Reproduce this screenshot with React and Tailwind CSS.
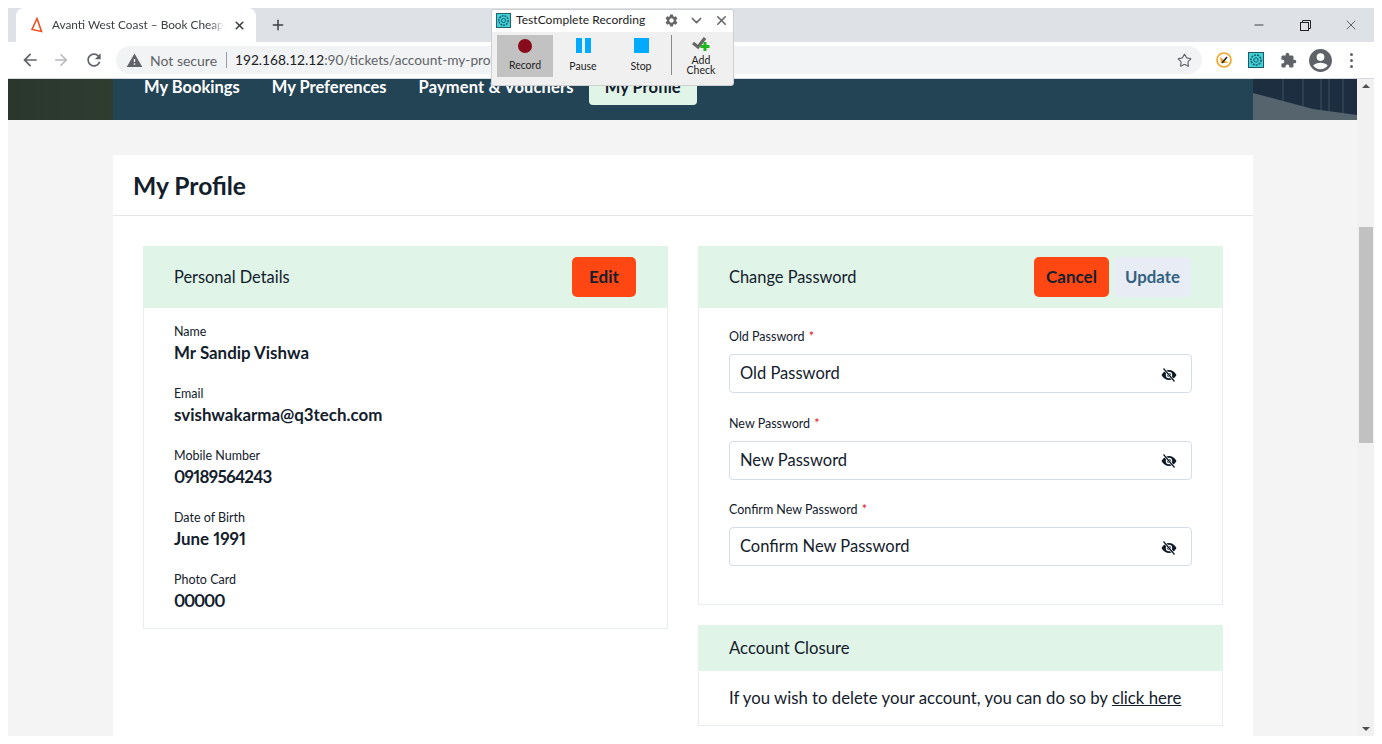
import { ArrowRight, Star, X, Plus, Minus, ChevronDown } from 'lucide-react'

const details = [
  { label: 'Name', value: 'Mr Sandip Vishwa', cls: '' },
  { label: 'Email', value: 'svishwakarma@q3tech.com', cls: '' },
  { label: 'Mobile Number', value: '09189564243', cls: 'tracking-[-0.7px]' },
  { label: 'Date of Birth', value: 'June 1991', cls: '' },
  { label: 'Photo Card', value: '00000', cls: 'tracking-[-1.2px]' },
]

const passwords = ['Old Password', 'New Password', 'Confirm New Password']

const TcLogo = ({ size = 16 }) => (
  <svg width={size} height={size} viewBox="0 0 16 16">
    <rect x="0.5" y="0.5" width="15" height="15" fill="#3fd0d8" stroke="#1d5a66" />
    <circle cx="8" cy="8" r="5" fill="none" stroke="#1d5a66" strokeWidth="1.5" strokeDasharray="2 1" />
    <circle cx="8" cy="8" r="2.2" fill="none" stroke="#1d5a66" />
  </svg>
)

// crossed eye, filled like the site's icon font
const HiddenEye = () => (
  <svg width="16" height="14" viewBox="0 0 16 14" className="mt-[2px]">
    <path d="M0.5 7C2.5 3.6 5 2 8 2s5.5 1.6 7.5 5c-2 3.4-4.5 5-7.5 5S2.500 10.400 0.500 7z" fill="#0d1a26" />
    <circle cx="8" cy="7" r="2.6" fill="none" stroke="#fff" strokeWidth="1.2" />
    <path d="M2.500 0.500L13.500 13.500" stroke="#fff" strokeWidth="2.400" />
    <path d="M2.500 0.500L13.500 13.500" stroke="#0d1a26" strokeWidth="1.200" />
  </svg>
)

const MaterialIcon = ({ d, size = 24, className = '' }) => (
  <svg width={size} height={size} viewBox="0 0 24 24" fill="currentColor" className={className}>
    <path d={d} />
  </svg>
)

const ICONS = {
  back: 'M20 11H7.830l5.590-5.590L12 4l-8 8 8 8 1.410-1.410L7.830 13H20v-2z',
  reload: 'M17.650 6.350C16.200 4.900 14.210 4 12 4c-4.420 0-7.990 3.580-7.990 8s3.570 8 7.990 8c3.730 0 6.840-2.550 7.730-6h-2.080c-.820 2.330-3.040 4-5.650 4-3.310 0-6-2.690-6-6s2.690-6 6-6c1.660 0 3.140.690 4.220 1.780L13 11h7V4l-2.350 2.350z',
  warning: 'M1 21h22L12 2 1 21zm12-3h-2v-2h2v2zm0-4h-2v-4h2v4z',
  puzzle: 'M20.500 11H19V7c0-1.100-.900-2-2-2h-4V3.500C13 2.120 11.880 1 10.500 1S8 2.120 8 3.500V5H4c-1.100 0-1.990.900-1.990 2v3.800H3.500c1.490 0 2.700 1.210 2.700 2.700s-1.210 2.700-2.700 2.700H2V20c0 1.100.900 2 2 2h3.800v-1.500c0-1.490 1.210-2.700 2.700-2.700 1.490 0 2.700 1.210 2.700 2.700V22H17c1.100 0 2-.900 2-2v-4h1.500c1.380 0 2.500-1.120 2.500-2.500S21.880 11 20.500 11z',
  profile: 'M12 1a11 11 0 1 0 0 22 11 11 0 0 0 0-22zm0 4a3.700 3.700 0 1 1 0 7.400A3.700 3.700 0 0 1 12 5zm0 15.500c-2.900 0-5.500-1.400-7-3.600 1-1.700 4.500-2.700 7-2.700s6 1 7 2.700c-1.500 2.200-4.100 3.600-7 3.600z',
  gear: 'M19.140 12.940c.040-.300.060-.610.060-.940 0-.320-.020-.640-.070-.940l2.030-1.580a.490.490 0 0 0 .120-.610l-1.920-3.320a.488.488 0 0 0-.590-.220l-2.390.960c-.500-.380-1.030-.700-1.620-.940l-.360-2.540a.484.484 0 0 0-.480-.410h-3.840c-.240 0-.430.170-.470.410l-.360 2.540c-.590.240-1.130.570-1.620.940l-2.390-.960c-.220-.080-.470 0-.590.220L2.740 8.870c-.120.210-.080.470.120.610l2.030 1.580c-.050.300-.090.630-.090.940s.020.640.070.940l-2.030 1.580a.490.490 0 0 0-.120.610l1.920 3.320c.120.220.370.290.590.220l2.390-.960c.500.380 1.030.700 1.620.940l.360 2.540c.050.240.240.410.480.410h3.840c.240 0 .440-.170.470-.410l.360-2.540c.590-.240 1.130-.560 1.620-.940l2.390.960c.220.080.470 0 .590-.220l1.920-3.320c.120-.220.070-.470-.120-.610l-2.010-1.580zM12 15.600c-1.980 0-3.600-1.620-3.600-3.600s1.620-3.600 3.600-3.600 3.600 1.620 3.600 3.600-1.620 3.600-3.600 3.600z',
}

function BrowserChrome() {
  return (
    <>
      <div className="h-[34px] bg-[#dee1e6] flex items-end shrink-0">
        <div className="ml-[8px] w-[240px] h-[34px] bg-white rounded-t-lg flex items-center pl-[15px] pr-[10px] text-[#3c4043]">
          <svg width="12" height="16" viewBox="0 0 12 16" className="shrink-0">
            <path d="M6 1.500L1 12.500L10.500 14.500Z" fill="none" stroke="#f04e23" strokeWidth="1.600" />
          </svg>
          <span className="ml-[9px] w-[172px] overflow-hidden whitespace-nowrap text-[11.800px] [mask-image:linear-gradient(to_right,black_92%,transparent)]">Avanti West Coast – Book Cheap Train Tickets</span>
          <X size={13} strokeWidth={3} className="ml-auto" />
        </div>
        <div className="h-[34px] flex items-center ml-[14px] text-[#3c4043]">
          <Plus size={16} strokeWidth={2.200} />
        </div>
        <div className="ml-auto h-[34px] flex items-center text-[#222]">
          <div className="w-[46px] flex justify-center"><Minus size={14} strokeWidth={1.400} /></div>
          <div className="w-[46px] flex justify-center">
            <svg width="11" height="11" viewBox="0 0 11 11" fill="none" stroke="#222">
              <rect x="0.500" y="2.500" width="8" height="8" />
              <path d="M2.500 2.500V0.500H10.500V8.500H8.500" />
            </svg>
          </div>
          <div className="w-[46px] flex justify-center"><X size={16} strokeWidth={1} /></div>
        </div>
      </div>
      <div className="h-[37px] bg-white border-b border-[#d5d7db] flex items-center shrink-0 text-[#5f6368]">
        <div className="w-[108px] flex items-center pl-[12px] gap-[12px]">
          <MaterialIcon d={ICONS.back} size={20} />
          <ArrowRight size={18} strokeWidth={2} className="text-[#b5b7ba]" />
          <MaterialIcon d={ICONS.reload} size={20} className="ml-[2px]" />
        </div>
        <div className="w-[1086px] h-[28px] rounded-full bg-[#f1f3f4] flex items-center pl-[10px] pr-[10px] text-[14px]">
          <MaterialIcon d={ICONS.warning} size={17} />
          <span className="ml-[7px]">Not secure</span>
          <span className="ml-[9px] mr-[8px] w-px h-[16px] bg-[#9a9da1]" />
          <span className="text-[#202124] text-[13.700px]">192.168.12.12<span className="text-[#5f6368]">:90/tickets/account-my-profile</span></span>
          <Star size={15} strokeWidth={1.800} className="ml-auto" />
        </div>
        <div className="flex items-center ml-[14px] gap-[16px]">
          <svg width="16" height="16" viewBox="0 0 16 16">
            <circle cx="8" cy="8" r="7" fill="#fff" stroke="#f7a11a" strokeWidth="1.600" />
            <path d="M4 5L12 11H5Z" fill="#f7a11a" />
            <path d="M11 5L6 11" stroke="#222" strokeWidth="1.500" />
          </svg>
          <TcLogo />
          <MaterialIcon d={ICONS.puzzle} size={17} />
        </div>
        <MaterialIcon d={ICONS.profile} size={25} className="ml-[11px]" />
        <div className="ml-[17px] flex flex-col gap-[3px]">
          <span className="w-[3px] h-[3px] rounded-full bg-[#5f6368]" />
          <span className="w-[3px] h-[3px] rounded-full bg-[#5f6368]" />
          <span className="w-[3px] h-[3px] rounded-full bg-[#5f6368]" />
        </div>
      </div>
    </>
  )
}

function NavBar() {
  return (
    <div className="h-[41px] flex shrink-0">
      <div className="w-[105px] bg-gradient-to-r from-[#2a372c] to-[#2f3c30]" />
      <div className="flex-1 bg-[#224455] flex items-start pl-[31px] text-white font-bold text-[16.500px] leading-[16px] gap-[32px]">
        <span>My Bookings</span>
        <span>My Preferences</span>
        <span className="-mr-[17px] tracking-[0.150px]">Payment &amp; Vouchers</span>
        <span className="h-[26px] w-[108px] bg-[#e0f4e8] text-[#13202c] rounded-b-[4px] text-center">My Profile</span>
      </div>
      <svg width="104" height="41" viewBox="0 0 104 41" className="shrink-0">
        <rect width="104" height="41" fill="#1c2e40" />
        <path d="M0 14L60 30L104 36V41H0Z" fill="#56646e" />
        <path d="M30 0V22M50 0V27M68 0V31M76 0V32M90 0V34" stroke="#2c4050" strokeWidth="2" />
      </svg>
    </div>
  )
}

function PersonalDetails() {
  return (
    <div className="w-[525px] h-[383px] border border-[#e8edf3] border-t-0">
      <div className="h-[62px] -mx-px bg-[#e0f4e8] flex items-center justify-between pl-[31px] pr-[32px]">
        <span className="text-[16.400px]">Personal Details</span>
        <button className="w-[64px] h-[40px] rounded-[5px] bg-[#ff4713] font-bold text-[17px]">Edit</button>
      </div>
      <div className="pl-[30px] pt-[16px] flex flex-col gap-[18px]">
        {details.map((d) => (
          <div key={d.label} className="h-[44px]">
            <div className="text-[12.500px] leading-[16px]">{d.label}</div>
            <div className={`font-bold text-[16.900px] leading-[26px] proportional-nums ${d.cls}`}>{d.value}</div>
          </div>
        ))}
      </div>
    </div>
  )
}

function ChangePassword() {
  return (
    <div className="h-[359px] border border-[#e8edf3] border-t-0">
      <div className="h-[62px] -mx-px bg-[#e0f4e8] flex items-center pl-[31px] pr-[32px]">
        <span className="text-[16.400px]">Change Password</span>
        <button className="ml-auto w-[75px] h-[40px] rounded-[5px] bg-[#ff4713] font-bold text-[17px]">Cancel</button>
        <button className="ml-[5px] w-[77px] h-[40px] rounded-[5px] bg-[#e8ecf4] text-[#336180] font-bold text-[16.800px]">Update</button>
      </div>
      <div className="px-[30px] pt-[21px] flex flex-col gap-[22.500px]">
        {passwords.map((p) => (
          <div key={p}>
            <div className="text-[12.500px] leading-[16px] mb-[9px]">{p} <span className="text-[#e01010] ml-[1px]">*</span></div>
            <div className="h-[39px] border border-[#d5dde6] rounded-[4px] flex items-center justify-between pl-[10px] pr-[14px] text-[16.500px]">
              <span>{p}</span>
              <HiddenEye />
            </div>
          </div>
        ))}
      </div>
    </div>
  )
}

function AccountClosure() {
  return (
    <div className="mt-[20px] h-[101px] border border-[#e8edf3] border-t-0">
      <div className="h-[46px] -mx-px bg-[#e0f4e8] flex items-center pl-[31px] pt-[1px] text-[16.700px]">Account Closure</div>
      <div className="pl-[30px] pt-[17px] text-[16.750px] leading-[20px]">
        If you wish to delete your account, you can do so by <span className="underline">click here</span>
      </div>
    </div>
  )
}

function RecorderWindow() {
  return (
    <div className="absolute left-[491px] top-[9px] w-[243px] h-[77px] bg-[#f0f0f0] border border-[#cfcfcf] rounded-[3px] text-[#222]">
      <div className="h-[22px] bg-white flex items-center pl-[4px] pb-[2px] rounded-t-[3px]">
        <TcLogo size={15} />
        <span className="ml-[5px] text-[12px] tracking-[0.050px]">TestComplete Recording</span>
        <MaterialIcon d={ICONS.gear} size={15} className="ml-auto text-[#666]" />
        <ChevronDown size={17} strokeWidth={2} className="ml-[9px] text-[#666]" />
        <X size={15} strokeWidth={2.500} className="ml-[9px] mr-[4px] text-[#666]" />
      </div>
      <div className="flex pl-[5px] pt-[3px] text-[10.500px] leading-[10px]">
        <div className="w-[56px] h-[42px] bg-[#c2c2c2] flex flex-col items-center pt-[4px] gap-[7px]">
          <span className="w-[14px] h-[14px] rounded-full bg-[#870b1a]" />
          <span>Record</span>
        </div>
        <div className="w-[60px] flex flex-col items-center pt-[3px] gap-[8px]">
          <span className="h-[15px] flex gap-[3px]">
            <span className="w-[6px] bg-[#00aaff]" />
            <span className="w-[6px] bg-[#00aaff]" />
          </span>
          <span>Pause</span>
        </div>
        <div className="w-[56px] flex flex-col items-center pt-[3px] gap-[8px]">
          <span className="w-[15px] h-[15px] bg-[#00aaff]" />
          <span>Stop</span>
        </div>
        <div className="w-px h-[40px] bg-[#8a8a8a] ml-[2px]" />
        <div className="w-[58px] flex flex-col items-center pt-[1px]">
          <svg width="18" height="17" viewBox="0 0 18 17">
            <path d="M1 7L6 11L13 2" fill="none" stroke="#666" strokeWidth="3.200" />
            <path d="M13 6V15M8.500 10.500H17.500" stroke="#1fb81f" strokeWidth="3" />
          </svg>
          <span className="mt-[2px]">Add</span>
          <span>Check</span>
        </div>
      </div>
    </div>
  )
}

export default function App() {
  return (
    <div className="relative w-[1382px] h-[744px] bg-white p-[8px] overflow-hidden font-['Lato',sans-serif]">
      <div className="h-[728px] flex flex-col">
        <BrowserChrome />
        <div className="flex-1 flex min-h-0">
          <div className="w-[1349px] flex flex-col bg-[#f4f4f4] text-[#13202c]">
            <NavBar />
            <div className="mt-[35px] ml-[105px] mr-[104px] flex-1 bg-white min-h-0">
              <div className="h-[61px] border-b border-[#e4e6e8] flex items-center pl-[20px] pt-[2px] text-[24.600px] font-bold">My Profile</div>
              <div className="flex gap-[30px] px-[30px] pt-[30px]">
                <PersonalDetails />
                <div className="w-[525px]">
                  <ChangePassword />
                  <AccountClosure />
                </div>
              </div>
            </div>
          </div>
          <div className="w-[17px] bg-[#f1f1f1] flex flex-col items-center justify-between py-[5px]">
            <span className="w-0 h-0 border-x-[4px] border-x-transparent border-b-[4px] border-b-[#505050]" />
            <span className="w-0 h-0 border-x-[4px] border-x-transparent border-t-[4px] border-t-[#505050]" />
          </div>
        </div>
      </div>
      <div className="absolute left-[1359px] top-[227px] w-[14px] h-[216px] bg-[#c1c1c1]" />
      <RecorderWindow />
    </div>
  )
}
